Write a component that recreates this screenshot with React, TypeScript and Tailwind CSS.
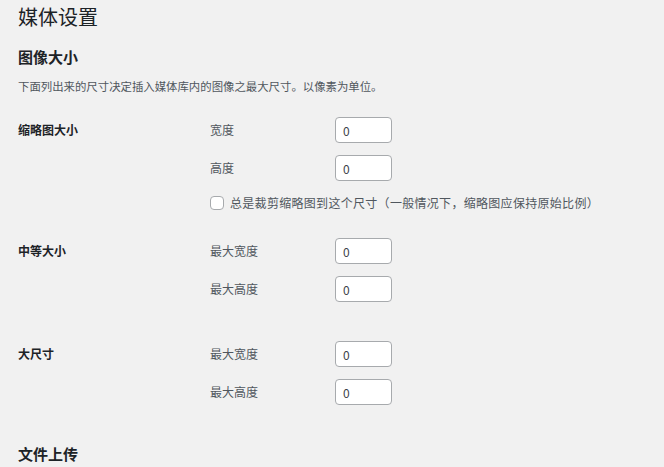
const font = { fontFamily: '"Noto Sans CJK SC", "Noto Sans", sans-serif' };

function SizeInput() {
  return (
    <input
      type="text"
      defaultValue="0"
      className="h-[26px] w-[57px] rounded-[4px] border border-[#a7aaad] bg-white px-[7px] text-[12px] text-[#3c434a] outline-none"
    />
  );
}

function Field({ label }: { label: string }) {
  return (
    <div className="flex h-[26px] items-center">
      <span className="w-[125px] text-[12px] text-[#50575e]">{label}</span>
      <SizeInput />
    </div>
  );
}

function Group({
  title,
  fields,
  className,
  children,
}: {
  title: string;
  fields: string[];
  className?: string;
  children?: React.ReactNode;
}) {
  return (
    <div className={"flex " + (className ?? "")}>
      <div className="flex h-[26px] w-[192px] items-center text-[12px] font-bold text-[#1d2327]">
        {title}
      </div>
      <div className="flex flex-col gap-[12px]">
        {fields.map((f) => (
          <Field key={f} label={f} />
        ))}
        {children}
      </div>
    </div>
  );
}

export default function App() {
  return (
    <div className="h-[467px] w-[664px] overflow-hidden bg-[#f1f1f1] pl-[18px]" style={font}>
      <h1 className="pt-[3px] text-[20px] leading-[28px] font-normal text-[#1d2327]">媒体设置</h1>
      <h2 className="mt-[16px] text-[15px] leading-[20px] font-bold text-[#1d2327]">图像大小</h2>
      <p className="mt-[11px] text-[11.4px] leading-[16px] text-[#50575e]">
        下面列出来的尺寸决定插入媒体库内的图像之最大尺寸。以像素为单位。
      </p>

      <Group title="缩略图大小" fields={["宽度", "高度"]} className="mt-[23px]">
        <label className="mt-[2px] flex h-[16px] items-center">
          <span className="h-[14px] w-[14px] rounded-[4px] border border-[#a7aaad] bg-white" />
          <span className="ml-[6px] text-[12px] tracking-[0.3px] text-[#50575e]">
            总是裁剪缩略图到这个尺寸（一般情况下，缩略图应保持原始比例）
          </span>
        </label>
      </Group>

      <Group title="中等大小" fields={["最大宽度", "最大高度"]} className="mt-[27px]" />

      <Group title="大尺寸" fields={["最大宽度", "最大高度"]} className="mt-[39px]" />

      <h2 className="mt-[39px] text-[15px] leading-[20px] font-bold text-[#1d2327]">文件上传</h2>
    </div>
  );
}
